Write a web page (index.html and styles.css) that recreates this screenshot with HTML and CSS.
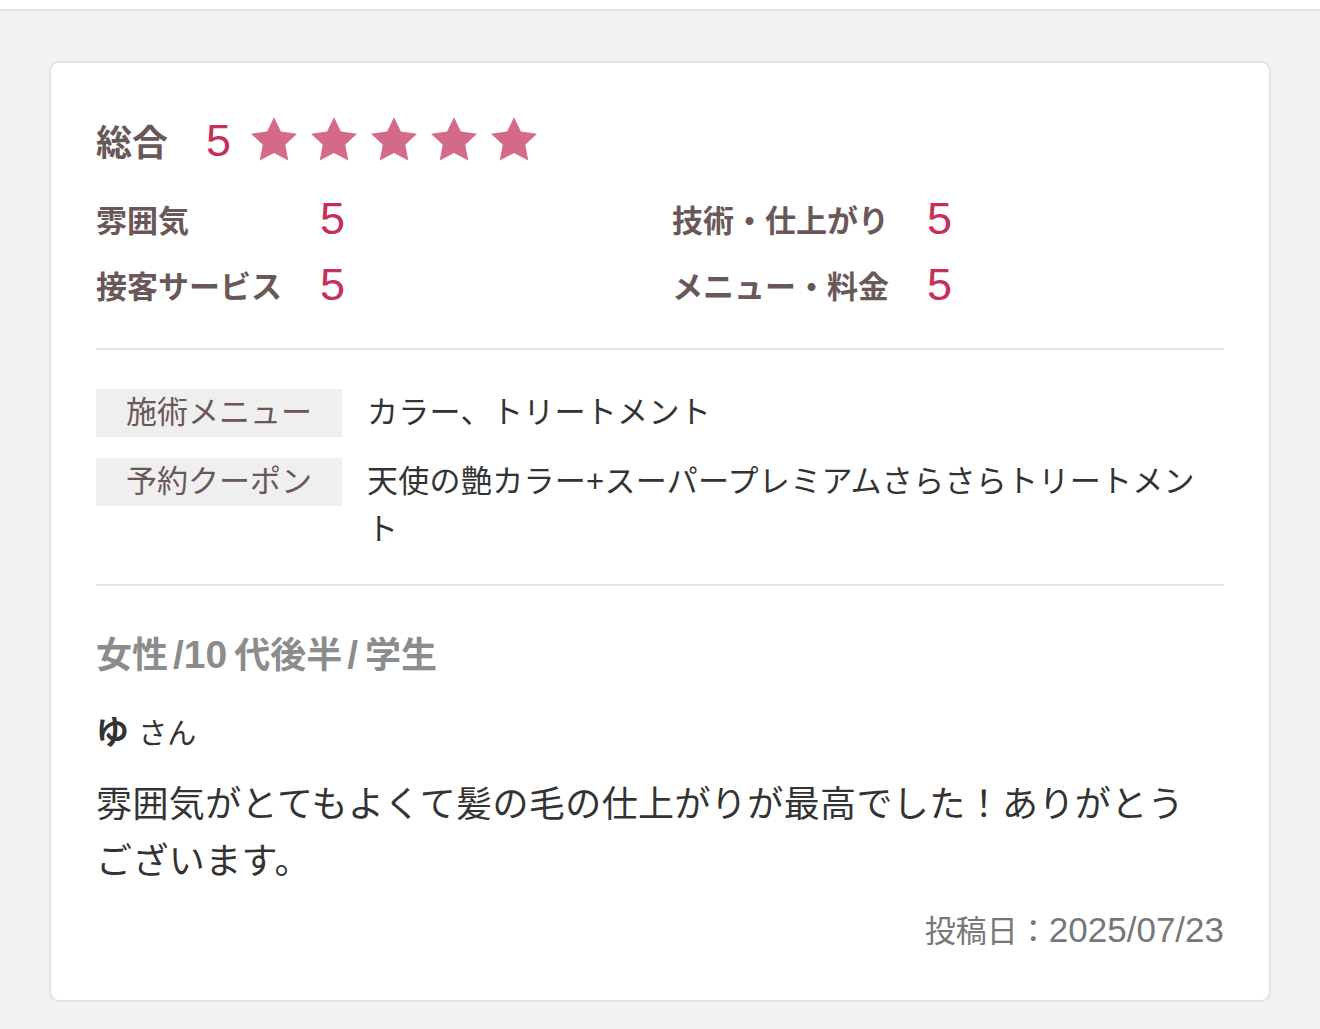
FILE: index.html
```html
<!DOCTYPE html>
<html lang="ja">
<head>
<meta charset="utf-8">
<link rel="stylesheet" href="styles.css">
</head>
<body>
<div class="topbar"></div>
<main class="page">
  <article class="card">
    <div class="overall">
      <span class="overall-label">総合</span>
      <span class="score score-big">5</span>
      <span class="stars">
        <svg class="star" viewBox="0 0 24 24"><polygon points="12,1.5 15.2,8.1 22.6,9.1 17.2,14.2 18.6,21.5 12,18 5.4,21.5 6.8,14.2 1.4,9.1 8.8,8.1"/></svg>
        <svg class="star" viewBox="0 0 24 24"><polygon points="12,1.5 15.2,8.1 22.6,9.1 17.2,14.2 18.6,21.5 12,18 5.4,21.5 6.8,14.2 1.4,9.1 8.8,8.1"/></svg>
        <svg class="star" viewBox="0 0 24 24"><polygon points="12,1.5 15.2,8.1 22.6,9.1 17.2,14.2 18.6,21.5 12,18 5.4,21.5 6.8,14.2 1.4,9.1 8.8,8.1"/></svg>
        <svg class="star" viewBox="0 0 24 24"><polygon points="12,1.5 15.2,8.1 22.6,9.1 17.2,14.2 18.6,21.5 12,18 5.4,21.5 6.8,14.2 1.4,9.1 8.8,8.1"/></svg>
        <svg class="star" viewBox="0 0 24 24"><polygon points="12,1.5 15.2,8.1 22.6,9.1 17.2,14.2 18.6,21.5 12,18 5.4,21.5 6.8,14.2 1.4,9.1 8.8,8.1"/></svg>
      </span>
    </div>
    <div class="subs">
      <span class="sub-label">雰囲気</span><span class="score">5</span>
      <span class="sub-label">技術・仕上がり</span><span class="score">5</span>
      <span class="sub-label">接客サービス</span><span class="score">5</span>
      <span class="sub-label">メニュー・料金</span><span class="score">5</span>
    </div>
    <hr class="divider divider-a">
    <dl class="info">
      <div class="info-row">
        <dt class="info-label">施術メニュー</dt>
        <dd class="info-value">カラー、トリートメント</dd>
      </div>
      <div class="info-row">
        <dt class="info-label">予約クーポン</dt>
        <dd class="info-value">天使の艶カラー+スーパープレミアムさらさらトリートメント</dd>
      </div>
    </dl>
    <hr class="divider divider-b">
    <p class="demo">女性<span class="demo-latin">/10</span>代後半<span class="demo-latin">/</span>学生</p>
    <p class="name"><b>ゆ</b> <span class="san">さん</span></p>
    <p class="comment">雰囲気がとてもよくて髪の毛の仕上がりが最高でした！ありがとうございます。</p>
    <p class="date">投稿日：<span class="date-num">2025/07/23</span></p>
  </article>
</main>
</body>
</html>
```

FILE: styles.css
```css
* { box-sizing: border-box; }
html, body { margin: 0; padding: 0; }
body {
  background: #f3f2f1;
  font-family: "Liberation Sans", "Noto Sans CJK JP", sans-serif;
  color: #333;
  height: 1029px;
  overflow: hidden;
}
.topbar {
  height: 11px;
  background: #fff;
  border-bottom: 2px solid #e2e2e4;
}
.page {
  padding: 50px 49px 0;
}
.card {
  background: #fff;
  border: 2px solid #e3e3e5;
  border-radius: 10px;
  padding: 49px 45px 48px;
}
.overall {
  display: flex;
  align-items: center;
  height: 56px;
}
.overall-label {
  font-size: 36px;
  font-weight: 700;
  color: #6a5858;
  margin-right: 38px;
}
.score {
  font-family: "Liberation Sans", sans-serif;
  font-size: 45px;
  color: #c4305a;
  line-height: 1;
}
.score-big { margin-right: 17px; }
.stars { display: flex; gap: 8px; }
.star { width: 52px; height: 52px; fill: #d56a88; display: block; }

.subs {
  margin-top: 17px;
  display: grid;
  grid-template-columns: max-content 314px max-content 1fr;
  column-gap: 38px;
  grid-auto-rows: 66px;
  align-items: center;
}
.sub-label {
  font-size: 31px;
  font-weight: 700;
  color: #6a5858;
}
.divider {
  border: 0;
  border-top: 2px solid #e2e2e2;
  margin: 0;
}
.divider-a { margin-top: 31px; }
.info { margin: 39px 0 0; }
.info-row {
  display: flex;
  gap: 25px;
  align-items: flex-start;
}
.info-row + .info-row { margin-top: 21px; }
.info-label {
  flex: 0 0 246px;
  height: 48px;
  background: #efefef;
  color: #6a5858;
  font-size: 31px;
  line-height: 48px;
  text-align: center;
}
.info-value {
  margin: 0;
  font-size: 31px;
  letter-spacing: 0.3px;
  line-height: 48px;
  color: #333;
}
.divider-b { margin-top: 30px; }
.demo {
  margin: 44px 0 0;
  font-size: 36px;
  line-height: 50px;
  font-weight: 700;
  color: #8c8c8c;
}
.demo-latin { font-size: 39px; margin: 0 7px 0 5px; }
.name {
  margin: 28px 0 0;
  line-height: 48px;
  font-size: 33px;
  color: #333;
}
.name b { font-weight: 700; }
.san { font-size: 29px; }
.comment {
  margin: 18px 0 0;
  padding-right: 12px;
  font-size: 36px;
  letter-spacing: 0.4px;
  line-height: 57px;
  color: #333;
}
.date {
  margin: 20px 0 0;
  text-align: right;
  font-size: 31px;
  line-height: 40px;
  color: #777;
}
.date-num { font-size: 35px; }
```
